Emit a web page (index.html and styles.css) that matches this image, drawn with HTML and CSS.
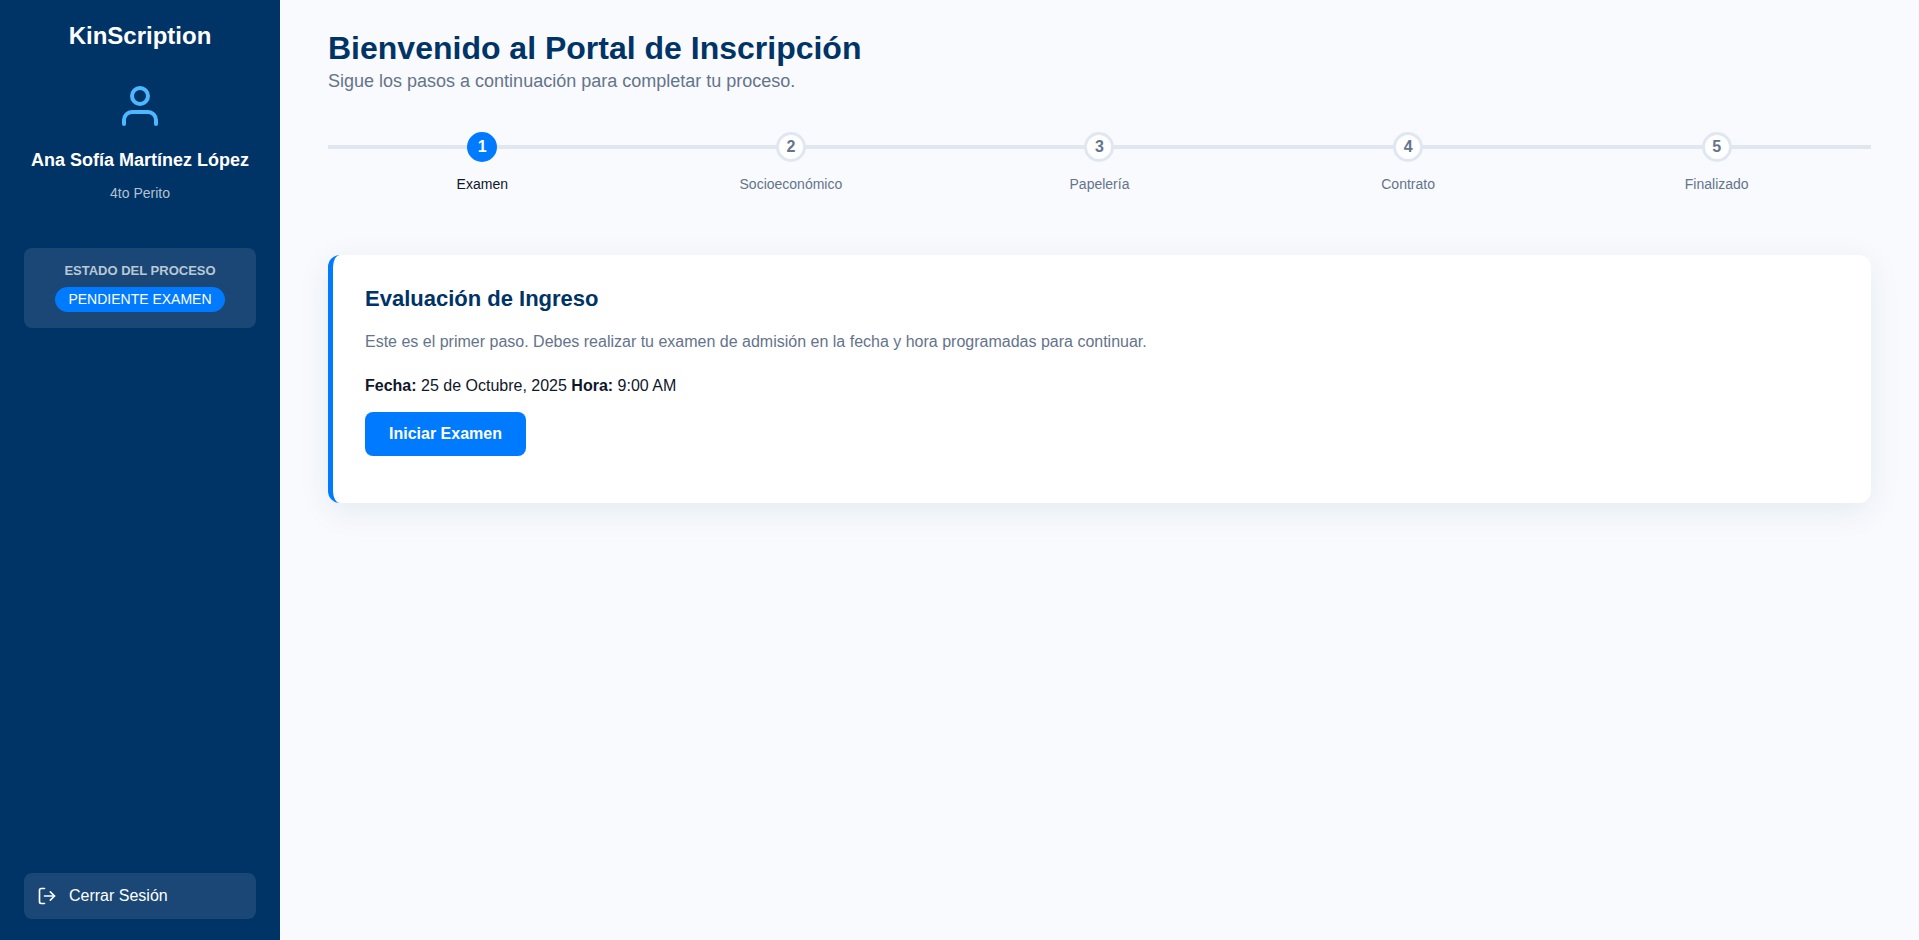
FILE: index.html
```html
<!DOCTYPE html>
<html lang="es">
<head>
<meta charset="utf-8">
<meta name="viewport" content="width=device-width, initial-scale=1">
<title>KinScription</title>
<link rel="stylesheet" href="styles.css">
</head>
<body>
<div class="portal">
  <aside class="sidebar">
    <p class="brand">KinScription</p>
    <section class="profile">
      <svg class="avatar" viewBox="0 0 24 24" aria-hidden="true"><path d="M20 21v-2a4 4 0 0 0-4-4H8a4 4 0 0 0-4 4v2"/><circle cx="12" cy="7" r="4"/></svg>
      <h2 class="profile-name">Ana Sofía Martínez López</h2>
      <p class="profile-grade">4to Perito</p>
    </section>
    <section class="status">
      <h3 class="status-title">ESTADO DEL PROCESO</h3>
      <span class="status-badge">PENDIENTE EXAMEN</span>
    </section>
    <button class="logout" type="button">
      <svg class="logout-icon" viewBox="0 0 24 24" aria-hidden="true"><path d="M9 21H5a2 2 0 0 1-2-2V5a2 2 0 0 1 2-2h4"/><path d="M16 17l5-5-5-5"/><path d="M21 12H9"/></svg>
      <span>Cerrar Sesión</span>
    </button>
  </aside>
  <main class="content">
    <header class="heading">
      <h1 class="title">Bienvenido al Portal de Inscripción</h1>
      <p class="subtitle">Sigue los pasos a continuación para completar tu proceso.</p>
    </header>
    <ol class="steps">
      <li class="step step-active"><span class="step-number">1</span><span class="step-label">Examen</span></li>
      <li class="step"><span class="step-number">2</span><span class="step-label">Socioeconómico</span></li>
      <li class="step"><span class="step-number">3</span><span class="step-label">Papelería</span></li>
      <li class="step"><span class="step-number">4</span><span class="step-label">Contrato</span></li>
      <li class="step"><span class="step-number">5</span><span class="step-label">Finalizado</span></li>
    </ol>
    <section class="card">
      <h2 class="card-title">Evaluación de Ingreso</h2>
      <p class="card-text">Este es el primer paso. Debes realizar tu examen de admisión en la fecha y hora programadas para continuar.</p>
      <p class="card-date"><strong>Fecha:</strong> 25 de Octubre, 2025 <strong>Hora:</strong> 9:00 AM</p>
      <button class="start" type="button">Iniciar Examen</button>
    </section>
  </main>
</div>
</body>
</html>
```
FILE: styles.css
```css
* {
  box-sizing: border-box;
}

body,
h1,
h2,
h3,
p,
ol {
  margin: 0;
  padding: 0;
}

body {
  font-family: "Liberation Sans", Arial, sans-serif;
  font-size: 16px;
  line-height: 24px;
  color: #0f172a;
  background: #f8fafd;
}

button {
  font: inherit;
  border: 0;
  color: #fff;
  cursor: pointer;
}

.portal {
  display: flex;
  min-height: 100vh;
}

.sidebar {
  display: flex;
  flex-direction: column;
  flex: 0 0 280px;
  padding: 20px 24px 21px;
  color: #fff;
  text-align: center;
  background: #003366;
}

.brand {
  font-size: 24px;
  line-height: 32px;
  font-weight: 700;
}

.profile {
  display: flex;
  flex-direction: column;
  align-items: center;
  padding: 30px 0 45px;
}

.avatar {
  width: 48px;
  height: 48px;
  fill: none;
  stroke: #4db8ff;
  stroke-width: 2;
  stroke-linecap: round;
  stroke-linejoin: round;
}

.profile-name {
  margin: 16px 0 9px;
  font-size: 18px;
  line-height: 28px;
}

.profile-grade {
  font-size: 14px;
  line-height: 20px;
  color: #b3c2d1;
}

.status {
  padding: 12px 16px 16px;
  border-radius: 8px;
  background: rgba(255, 255, 255, 0.1);
}

.status-title {
  margin-bottom: 5px;
  font-size: 13px;
  line-height: 22px;
  color: #bac8d6;
}

.status-badge {
  display: inline-block;
  padding: 0 13px;
  border-radius: 13px;
  font-size: 14px;
  line-height: 25px;
  vertical-align: top;
  background: #007aff;
}

.logout {
  display: flex;
  align-items: center;
  gap: 12px;
  margin-top: auto;
  padding: 11px 13px;
  border-radius: 8px;
  background: rgba(255, 255, 255, 0.1);
}

.logout-icon {
  width: 20px;
  height: 20px;
  fill: none;
  stroke: currentColor;
  stroke-width: 2;
  stroke-linecap: round;
  stroke-linejoin: round;
}

.content {
  flex: 1;
  min-width: 0;
  padding: 28px 48px;
}

.title {
  font-size: 32px;
  line-height: 40px;
  color: #003366;
}

.subtitle {
  font-size: 18px;
  line-height: 26px;
  color: #64748b;
}

.steps {
  position: relative;
  display: grid;
  grid-template-columns: repeat(5, 1fr);
  margin: 38px 0 61px;
  list-style: none;
}

.steps::before {
  content: "";
  position: absolute;
  top: 13px;
  left: 0;
  right: 0;
  height: 4px;
  background: #e0e7f1;
}

.step {
  position: relative;
  display: flex;
  flex-direction: column;
  align-items: center;
  gap: 12px;
  color: #64748b;
}

.step-number {
  width: 30px;
  height: 30px;
  border: 3px solid #e0e7f1;
  border-radius: 50%;
  font-weight: 700;
  line-height: 24px;
  text-align: center;
  background: #fff;
}

.step-label {
  font-size: 14px;
  line-height: 20px;
}

.step-active {
  color: #0f172a;
}

.step-active .step-number {
  border-color: #007aff;
  color: #fff;
  background: #007aff;
}

.card {
  padding: 28px 32px 47px;
  border-left: 5px solid #007aff;
  border-radius: 12px;
  background: #fff;
  box-shadow: 0 8px 32px rgba(0, 51, 102, 0.08);
}

.card-title {
  margin-bottom: 15px;
  font-size: 22px;
  line-height: 32px;
  color: #003366;
}

.card-text {
  margin-bottom: 20px;
  color: #64748b;
}

.card-date {
  margin-bottom: 14px;
}

.start {
  padding: 10px 24px;
  border-radius: 8px;
  font-weight: 700;
  background: #007aff;
}
```
